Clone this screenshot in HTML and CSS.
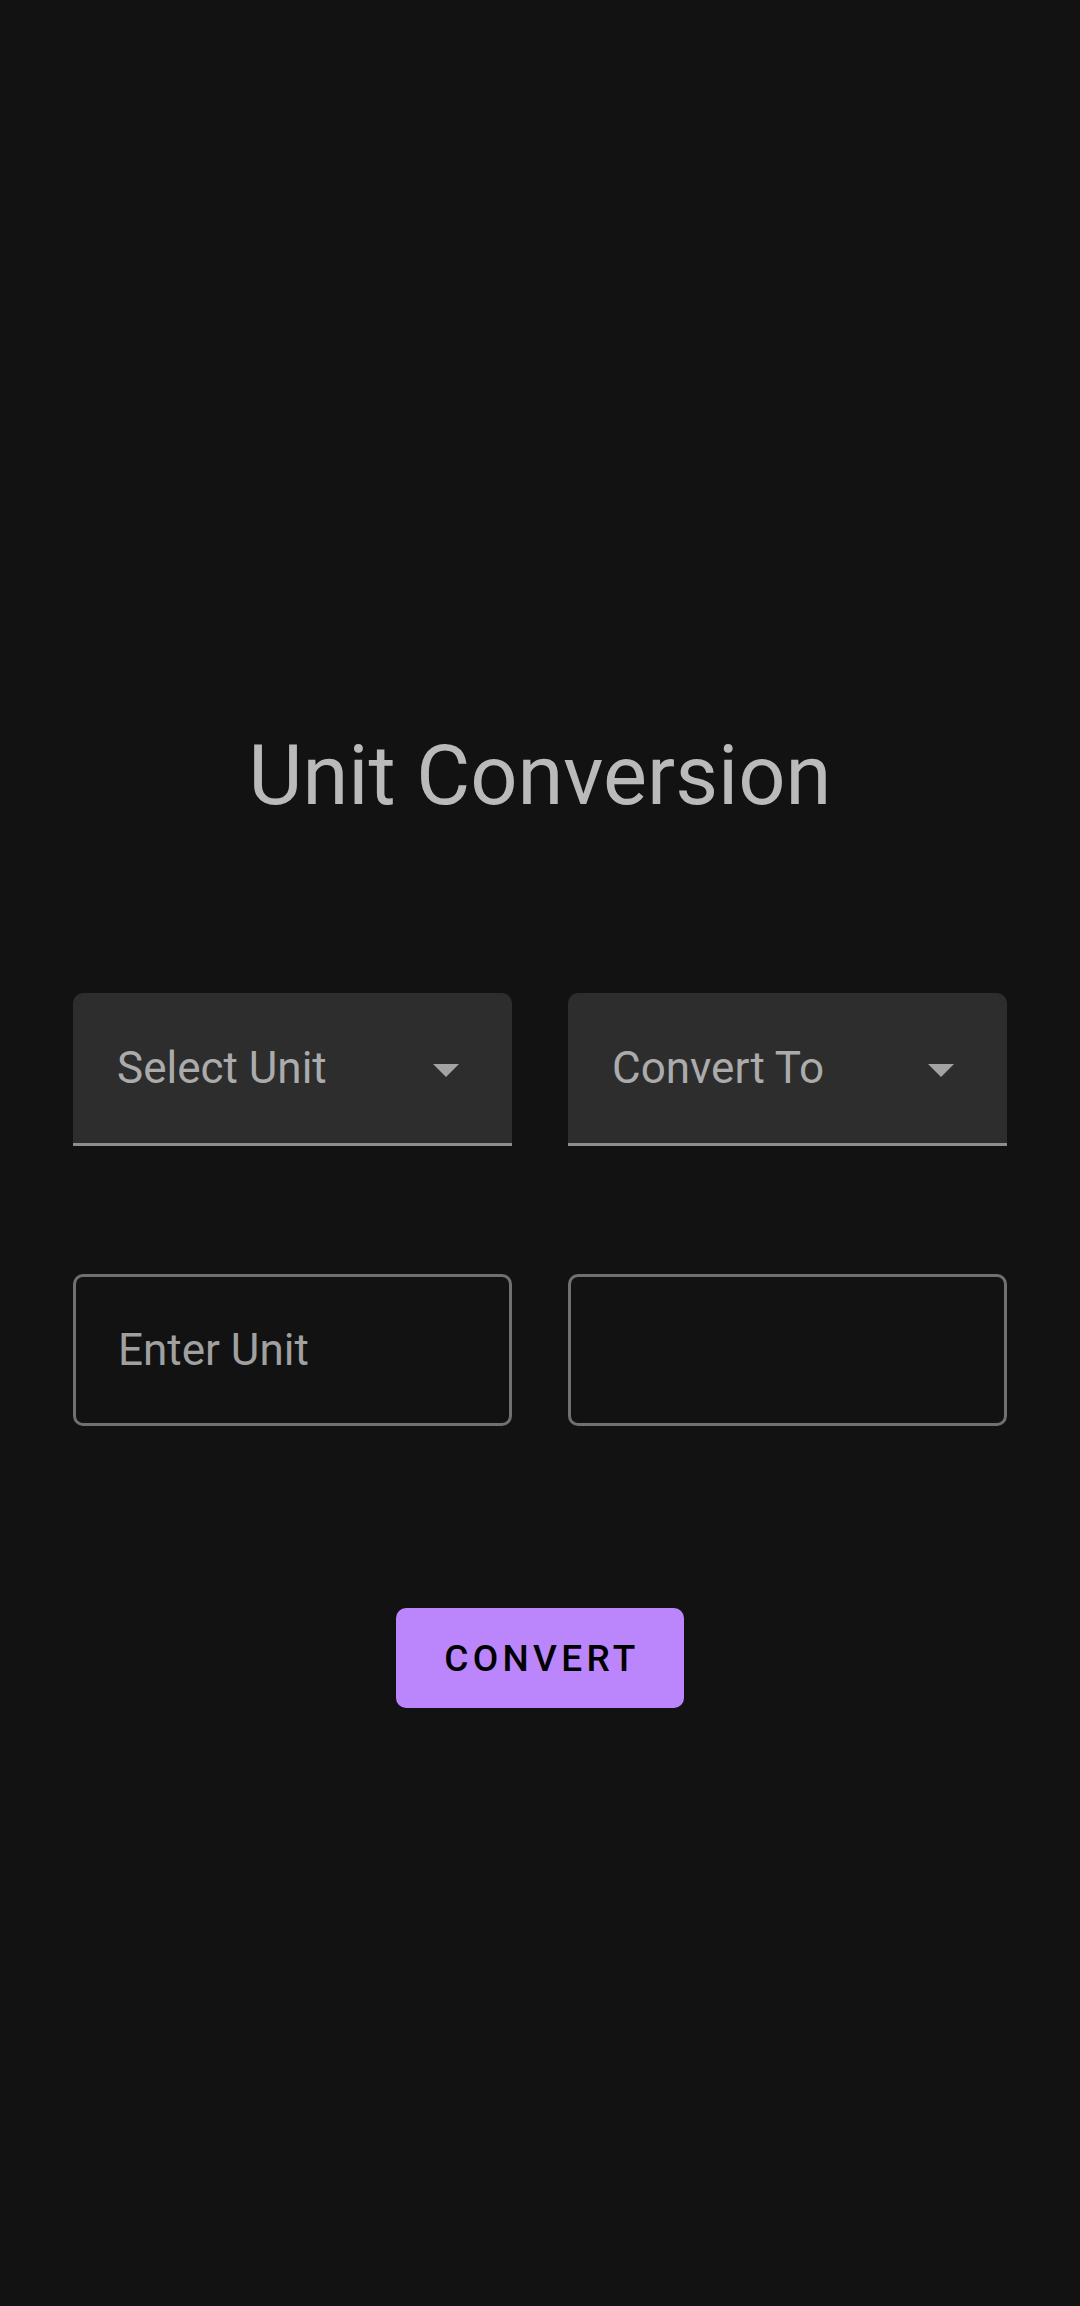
FILE: index.html
```html
<!DOCTYPE html>
<html lang="en">
<head>
<meta charset="utf-8">
<title>Unit Conversion</title>
<link rel="stylesheet" href="styles.css">
</head>
<body>
<main class="screen">
  <h1 class="title">Unit Conversion</h1>
  <div class="row row-selects">
    <div class="select">
      <span class="select-label">Select Unit</span>
      <svg class="arrow" width="26" height="13" viewBox="0 0 26 13"><path d="M0 0 L26 0 L13 13 Z" fill="#a3a3a3"/></svg>
    </div>
    <div class="select">
      <span class="select-label">Convert To</span>
      <svg class="arrow" width="26" height="13" viewBox="0 0 26 13"><path d="M0 0 L26 0 L13 13 Z" fill="#a3a3a3"/></svg>
    </div>
  </div>
  <div class="row row-inputs">
    <div class="field"><span class="placeholder">Enter Unit</span></div>
    <div class="field"></div>
  </div>
  <div class="actions">
    <button class="btn" type="button">CONVERT</button>
  </div>
</main>
</body>
</html>
```

FILE: styles.css
```css
html, body {
  margin: 0;
  padding: 0;
  background: #121212;
}
body {
  width: 1080px;
  height: 2306px;
  font-family: Roboto, "Noto Sans", "Liberation Sans", sans-serif;
  overflow: hidden;
}
.screen {
  display: flex;
  flex-direction: column;
  padding: 726px 73px 0 73px;
}
.title {
  margin: 0;
  font-size: 83px;
  font-weight: 400;
  line-height: 100px;
  height: 100px;
  color: #bababa;
  text-align: center;
}
.row {
  display: grid;
  grid-template-columns: 439px 439px;
  column-gap: 56px;
}
.row-selects {
  margin-top: 167px;
}
.select {
  box-sizing: border-box;
  height: 153px;
  background: #2d2d2d;
  border-radius: 10px 10px 0 0;
  border-bottom: 3px solid #8e8e8e;
  display: flex;
  align-items: center;
  justify-content: space-between;
  padding: 0 53px 0 44px;
}
.select-label {
  font-size: 44px;
  color: #ababab;
  line-height: 50px;
}
.arrow {
  display: block;
  margin-top: 4px;
}
.row-inputs {
  margin-top: 128px;
}
.field {
  box-sizing: border-box;
  height: 152px;
  border: 3px solid #707070;
  border-radius: 10px;
  display: flex;
  align-items: center;
  padding: 0 42px;
}
.placeholder {
  font-size: 44px;
  color: #a0a0a0;
  line-height: 50px;
}
.actions {
  display: flex;
  justify-content: center;
  margin-top: 182px;
}
.btn {
  width: 288px;
  height: 100px;
  border: none;
  border-radius: 10px;
  background: #bb86fc;
  color: #000;
  font-family: Roboto, "Noto Sans", "Liberation Sans", sans-serif;
  font-size: 37px;
  font-weight: 500;
  letter-spacing: 4.3px;
  padding: 0 0 0 4px;
  cursor: pointer;
}
```
